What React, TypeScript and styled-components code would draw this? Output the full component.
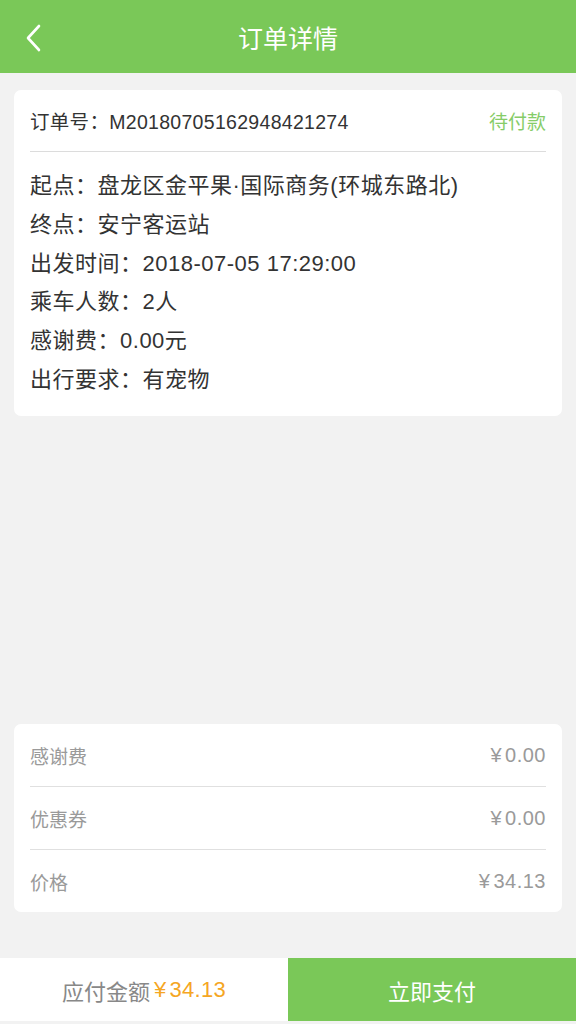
import styled, { createGlobalStyle } from "styled-components"

const GlobalStyle = createGlobalStyle`
  html, body {
    margin: 0;
    padding: 0;
    background: #f2f2f2;
  }
  body {
    font-family: "Liberation Sans", "Noto Sans CJK SC", sans-serif;
  }
`

type Fee = {
  label: string
  value: string
}

const details: [string, string][] = [
  ["起点", "盘龙区金平果·国际商务(环城东路北)"],
  ["终点", "安宁客运站"],
  ["出发时间", "2018-07-05 17:29:00"],
  ["乘车人数", "2人"],
  ["感谢费", "0.00元"],
  ["出行要求", "有宠物"],
]

const fees: Fee[] = [
  { label: "感谢费", value: "0.00" },
  { label: "优惠券", value: "0.00" },
  { label: "价格", value: "34.13" },
]

export default function App() {
  return (
    <Page>
      <GlobalStyle />
      <Header>
        <BackButton>
          <svg width="18" height="30" viewBox="0 0 18 30">
            <path
              d="M15 3 L4 15 L15 27"
              fill="none"
              stroke="white"
              strokeWidth="2.6"
              strokeLinecap="round"
              strokeLinejoin="round"
            />
          </svg>
        </BackButton>
        <Title>订单详情</Title>
      </Header>

      <Card>
        <OrderRow>
          <OrderNo>订单号：M20180705162948421274</OrderNo>
          <Status>待付款</Status>
        </OrderRow>
        <DetailList>
          {details.map(([k, v]) => (
            <DetailLine key={k}>
              {k}：{v}
            </DetailLine>
          ))}
        </DetailList>
      </Card>

      <Spacer />

      <FeeCard>
        {fees.map((f, i) => (
          <FeeRow key={f.label} last={i === fees.length - 1}>
            <span>{f.label}</span>
            <FeeValue>
              <Yen>¥</Yen>
              {f.value}
            </FeeValue>
          </FeeRow>
        ))}
      </FeeCard>

      <BottomBar>
        <Total>
          应付金额
          <Amount>
            <Yen>¥</Yen>34.13
          </Amount>
        </Total>
        <PayButton>立即支付</PayButton>
      </BottomBar>
    </Page>
  )
}

const Page = styled.div`
  display: flex;
  flex-direction: column;
  height: 1024px;
  background: #f2f2f2;
`

const Header = styled.div`
  position: relative;
  display: flex;
  align-items: center;
  justify-content: center;
  height: 73px;
  background: #7ac858;
`

const BackButton = styled.div`
  position: absolute;
  left: 24px;
  top: 23px;
  display: flex;
`

const Title = styled.div`
  color: #fff;
  font-size: 25px;
`

const Card = styled.div`
  margin: 17px 14px 0;
  padding: 0 16px 16px;
  background: #fff;
  border-radius: 7px;
`

const OrderRow = styled.div`
  display: flex;
  align-items: center;
  justify-content: space-between;
  height: 61px;
  border-bottom: 1px solid #dcdcdc;
`

const OrderNo = styled.span`
  font-size: 19.5px;
  letter-spacing: 0.3px;
  color: #333;
`

const Status = styled.span`
  font-size: 19px;
  color: #86cc68;
`

const DetailList = styled.div`
  display: flex;
  flex-direction: column;
  padding-top: 15px;
`

const DetailLine = styled.div`
  height: 38.8px;
  line-height: 38.8px;
  font-size: 22px;
  letter-spacing: 0.5px;
  color: #333;
  white-space: nowrap;
`

const Spacer = styled.div`
  flex: 1;
`

const FeeCard = styled.div`
  margin: 0 14px 46px;
  padding: 0 16px;
  background: #fff;
  border-radius: 7px;
`

const FeeRow = styled.div<{ last?: boolean }>`
  display: flex;
  align-items: center;
  justify-content: space-between;
  height: 62px;
  font-size: 19px;
  color: #9a9a9a;
  border-bottom: ${(p) => (p.last ? "none" : "1px solid #e0e0e0")};
`

const FeeValue = styled.span`
  font-size: 20px;
  letter-spacing: 0.5px;
`

const Yen = styled.span`
  margin-right: 3px;
`

const BottomBar = styled.div`
  display: flex;
  height: 63px;
  margin-bottom: 3px;
`

const Total = styled.div`
  flex: 1;
  display: flex;
  align-items: center;
  justify-content: center;
  background: #fff;
  font-size: 22px;
  color: #888;
`

const Amount = styled.span`
  margin-left: 4px;
  letter-spacing: 0.3px;
  color: #f5a623;
`

const PayButton = styled.div`
  flex: 1;
  display: flex;
  align-items: center;
  justify-content: center;
  background: #7ac858;
  color: #fff;
  font-size: 22px;
`
